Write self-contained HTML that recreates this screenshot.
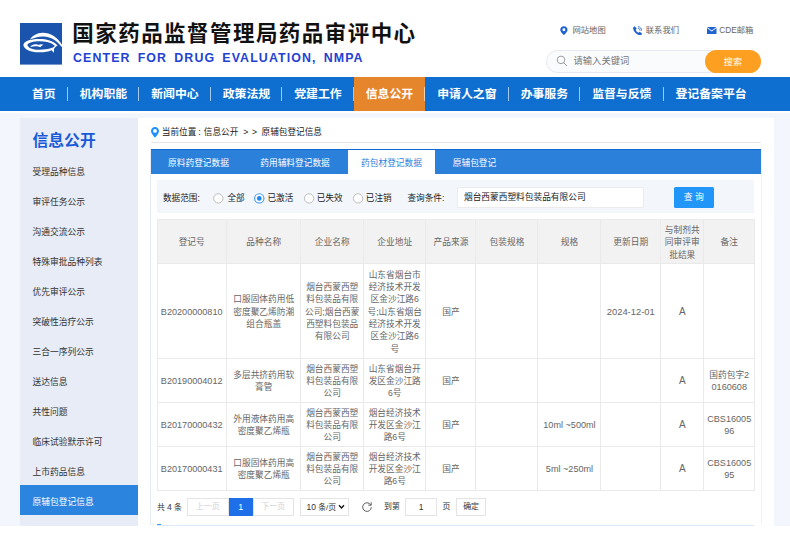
<!DOCTYPE html>
<html lang="zh-CN">
<head>
<meta charset="utf-8">
<title>原辅包登记信息 - 国家药品监督管理局药品审评中心</title>
<style>
*{margin:0;padding:0;box-sizing:border-box;}
html,body{width:790px;height:535px;overflow:hidden;background:#fff;}
body{position:relative;font-family:"Liberation Sans","Noto Sans CJK SC",sans-serif;color:#333;}
.abs{position:absolute;}
.nw{white-space:nowrap;}

/* header */
#logo{left:20px;top:23.1px;width:42px;height:41.6px;overflow:hidden;}
#title{left:72.3px;top:20.2px;font-size:21.5px;line-height:28px;font-weight:bold;color:#111;letter-spacing:1.45px;}
#etitle{left:73px;top:49.6px;font-size:12.4px;line-height:16px;font-weight:bold;color:#2342d2;letter-spacing:1.1px;word-spacing:2.6px;}
.tl{top:24px;font-size:8.3px;line-height:12px;color:#666;}
#sbox{left:546px;top:50px;width:215px;height:23px;border:1px solid #e6e9ef;border-radius:12px;background:#fafbfd;}
#sbtn{left:705px;top:50px;width:56px;height:23px;border-radius:12px;background:#fd9f20;color:#fff;font-size:9.2px;line-height:25.4px;text-align:center;}
#sph{left:573.5px;top:55px;font-size:9.3px;line-height:13px;color:#777;}

/* nav */
#nav{left:0;top:77px;width:790px;height:34px;background:#0f6fd0;}
#nav ul{position:absolute;left:20px;top:0;height:34px;list-style:none;display:flex;}
#nav li{position:relative;height:34px;line-height:34px;padding:0 12px;font-size:11.89px;font-weight:bold;color:#fff;white-space:nowrap;}
#nav li:not(:last-child):after{content:"";position:absolute;right:0;top:10px;width:1px;height:14px;background:rgba(255,255,255,.62);}
#nav li.on{background:#e5852c;}

/* page */
#pagebg{left:0;top:112.6px;width:790px;height:413px;background:#f3f7fd;}
#side{left:20px;top:117.5px;width:118px;height:408.100px;background:#e7ecf6;}
#side h2{position:absolute;left:12.5px;top:12.2px;font-size:15.8px;line-height:22px;color:#1a5ad8;font-weight:bold;white-space:nowrap;}
#side ul{position:absolute;left:0;top:37.5px;width:118px;list-style:none;}
#side li{height:30px;line-height:30px;padding-top:2.2px;padding-left:12.5px;font-size:8.75px;color:#333;white-space:nowrap;overflow:hidden;}
#side li.on{background:#2b84dd;color:#fff;height:29.5px;}

#main{left:138px;top:117.5px;width:635.5px;height:408px;background:#fff;}
#crumb{left:161.8px;top:125.8px;width:170px;height:13px;font-size:8.65px;line-height:13px;color:#222;}
#crumb span{position:absolute;top:0;}
#hr{left:151px;top:142px;width:610px;height:1px;background:#e6e6e6;}
#tabs{left:151px;top:149px;width:610px;height:25px;background:linear-gradient(#1068d0 0,#1068d0 1.4px,#2b80da 1.5px,#2b80da 100%);}
.tab{top:149px;height:25px;line-height:28.4px;font-size:8.7px;color:#fff;text-align:center;white-space:nowrap;}
.tab.on{background:linear-gradient(#1068d0 0,#1068d0 1.4px,#fff 1.5px,#fff 100%);color:#2b7fd9;}
#tabc{left:150px;top:149px;width:612px;height:376px;border-left:1px solid #e4ebf4;border-right:1px solid #eef3f8;}
#bline{left:157px;top:524.5px;width:597px;height:1px;background:#dbe9fb;}
#bdot{left:157px;top:524px;width:3.5px;height:1px;background:#3b9bf5;}
#filt{left:157px;top:180px;width:597px;height:33.4px;background:#f3f6fb;}
.ft{top:191.5px;font-size:8.6px;line-height:13px;color:#222;}
.radio{top:192.8px;width:10.4px;height:10.4px;border:1px solid #b0b0b0;border-radius:50%;background:#fff;}
.radio.on{border-color:#1e80e8;}
.radio.on:after{content:"";position:absolute;left:2.2px;top:2.2px;width:4px;height:4px;border-radius:50%;background:#1e80e8;}
#inp{left:456.6px;top:187.4px;width:187.4px;height:20.8px;border:1px solid #ebebeb;border-radius:2px;background:#fff;font-size:8.7px;line-height:19.4px;padding-left:6.4px;color:#222;}
#qbtn{left:674px;top:187px;width:39.5px;height:20.5px;background:#2196f8;border-radius:1.5px;color:#fff;font-size:8.8px;line-height:20.5px;text-align:center;}

/* table */
#tbl{left:156.5px;top:218.9px;width:598px;border-collapse:collapse;table-layout:fixed;font-size:8.7px;line-height:12.35px;color:#666;}
#tbl td,#tbl th{border:1px solid #eaeaea;text-align:center;vertical-align:middle;padding:1.5px 0 0 0;font-weight:normal;white-space:nowrap;overflow:hidden;}
#tbl th{background:#f2f2f2;color:#666;}
#tbl .la{font-size:9.1px;}

/* pager */
.pg{top:498px;height:18px;line-height:18.6px;font-size:7.9px;color:#333;text-align:center;white-space:nowrap;}
.dg{font-size:8.5px;}
.pb{border:1px solid #e4e4e4;background:#fff;line-height:16.6px;}
</style>
</head>
<body>

<!-- header -->
<svg id="logo" class="abs" viewBox="0 0 42 41.6">
  <rect width="42" height="41.6" fill="#1a54ad"/>
  <path d="M9.800 16.600 C12.500 12.300 17 9.900 22.500 9.700 C31 9.500 38.500 14.500 43.700 24.800 L41.600 23.800 C37 17.800 31.500 13.700 23.500 13.400 C18.500 13.200 14 14.800 9.800 16.600 Z" fill="#fff"/>
  <path fill-rule="evenodd" d="M3.300 21.900 C4 19.400 6.800 17.700 9.700 17.100 C14 15.800 20 15.600 26 16.400 C31 17.300 35.200 19.700 37.600 22.500 C35.700 23.500 34.400 24.800 33.900 26.200 C34.300 27.500 34.100 28.700 33.300 29.800 C32.900 28.700 32.300 27.900 31.600 27.300 C28 28.900 23 29.600 18 29.300 C11.500 28.900 4.300 26.800 3.300 21.900 Z M7.300 21.900 C7.800 20.500 9.700 19.600 11.500 19.200 C15 18.100 22 17.900 27.300 18.900 C30.500 19.500 33.200 21.100 34.900 23 C33.500 24.200 32.400 24.800 31.500 25.100 C28 26.500 23 26.900 18.200 26.800 C13.200 26.600 8.200 25.100 7.300 21.900 Z" fill="#fff"/>
  <path d="M10.300 24 C11.300 22 13.500 21 16.200 21.200 C17.500 21.300 18.300 21.700 18.800 22.100 C19.900 21.200 22 21 23.600 22 C22.200 22.300 21.100 23 20.300 24.200 C19.500 23.900 18.800 23.700 18.200 23.600 C16 23.100 13 23.100 10.300 24 Z" fill="#fff"/>
</svg>
<div id="title" class="abs nw">国家药品监督管理局药品审评中心</div>
<div id="etitle" class="abs nw">CENTER FOR DRUG EVALUATION, NMPA</div>

<svg class="abs" style="left:559.900px;top:25.600px;width:7.800px;height:9.200px" viewBox="0 0 16 18"><path d="M8 0C3.6 0 0.5 3.2 0.5 7.2 0.5 12 8 18 8 18s7.5-6 7.5-10.8C15.500 3.200 12.400 0 8 0zm0 10.200a3 3 0 1 1 0-6 3 3 0 0 1 0 6z" fill="#1f63d0"/></svg>
<div class="abs nw tl" style="left:572.5px">网站地图</div>
<svg class="abs" style="left:632.5px;top:25.5px;width:9.5px;height:9.5px" viewBox="0 0 20 20"><path d="M4.200 1.200l3 3.600c.4.500.4 1.200 0 1.700l-1.400 1.700c1.200 2.600 3.200 4.600 5.800 5.800l1.700-1.400c.5-.4 1.200-.4 1.700 0l3.600 3c.6.500.6 1.400.1 2l-1.400 1.400c-.8.800-2 1.100-3.100.8C7.800 18.200 1.800 12.200.2 5.800c-.3-1.100 0-2.300.8-3.100l1.400-1.400c.5-.6 1.400-.6 1.800-.1z" fill="#1f63d0"/><path d="M11 1.500c4 .3 7.200 3.500 7.500 7.500M11 5c2.100.3 3.700 1.900 4 4" fill="none" stroke="#1f63d0" stroke-width="1.800" stroke-linecap="round"/></svg>
<div class="abs nw tl" style="left:645.8px">联系我们</div>
<svg class="abs" style="left:707px;top:27px;width:9.5px;height:7px" viewBox="0 0 19 14"><path d="M0 0h19L9.500 7z" fill="#1f63d0"/><path d="M0 2.200V14h19V2.200L9.500 9.200z" fill="#1f63d0"/></svg>
<div class="abs nw tl" style="left:719.3px">CDE邮箱</div>

<div id="sbox" class="abs"></div>
<svg class="abs" style="left:555.800px;top:55.300px;width:12px;height:12px" viewBox="0 0 24 24"><circle cx="10" cy="9.800" r="7.600" fill="none" stroke="#8e8e8e" stroke-width="1.700"/><path d="M15.600 15.600l5.800 5.800" stroke="#8e8e8e" stroke-width="1.900" stroke-linecap="round"/></svg>
<div id="sph" class="abs nw">请输入关键词</div>
<div id="sbtn" class="abs">搜索</div>

<!-- nav -->
<div id="nav" class="abs">
  <ul>
    <li>首页</li><li>机构职能</li><li>新闻中心</li><li>政策法规</li><li>党建工作</li><li class="on">信息公开</li><li>申请人之窗</li><li>办事服务</li><li>监督与反馈</li><li>登记备案平台</li>
  </ul>
</div>

<div id="pagebg" class="abs"></div>

<!-- sidebar -->
<div id="side" class="abs">
  <h2>信息公开</h2>
  <ul>
    <li>受理品种信息</li><li>审评任务公示</li><li>沟通交流公示</li><li>特殊审批品种列表</li><li>优先审评公示</li><li>突破性治疗公示</li><li>三合一序列公示</li><li>送达信息</li><li>共性问题</li><li>临床试验默示许可</li><li>上市药品信息</li><li class="on">原辅包登记信息</li>
  </ul>
</div>

<!-- main -->
<div id="main" class="abs"></div>
<svg class="abs" style="left:150.700px;top:127.200px;width:8px;height:10.600px" viewBox="0 0 16 21.200"><path d="M8 0C3.500 0 0 3.500 0 7.900 0 13.300 8 21.200 8 21.200S16 13.300 16 7.900C16 3.500 12.500 0 8 0zm0 11.600a3.800 3.800 0 1 1 0-7.600 3.800 3.800 0 0 1 0 7.600z" fill="#1e8fff"/></svg>
<div id="crumb" class="abs nw"><span style="left:0">当前位置</span><span style="left:36.500px">:</span><span style="left:42px">信息公开</span><span style="left:81.500px">&gt;</span><span style="left:90.300px">&gt;</span><span style="left:99.800px">原辅包登记信息</span></div>
<div id="hr" class="abs"></div>

<div id="tabc" class="abs"></div>
<div id="tabs" class="abs"></div>
<div class="abs tab" style="left:155px;width:87px">原料药登记数据</div>
<div class="abs tab" style="left:246.500px;width:97px">药用辅料登记数据</div>
<div class="abs tab on" style="left:348px;width:87px">药包材登记数据</div>
<div class="abs tab" style="left:439.500px;width:70px">原辅包登记</div>

<div id="filt" class="abs"></div>
<div class="abs nw ft" style="left:163px">数据范围:</div>
<svg class="abs" style="left:205px;top:190px;width:170px;height:17px" viewBox="0 0 170 17">
  <circle cx="13.300" cy="8.400" r="4.650" fill="#fff" stroke="#bdbdbd" stroke-width="1"/>
  <circle cx="54.300" cy="8.400" r="4.650" fill="#fff" stroke="#3d97f2" stroke-width="1.100"/>
  <circle cx="54.300" cy="8.400" r="2.350" fill="#1e88f5"/>
  <circle cx="104.100" cy="8.400" r="4.650" fill="#fff" stroke="#bdbdbd" stroke-width="1"/>
  <circle cx="153.100" cy="8.400" r="4.650" fill="#fff" stroke="#bdbdbd" stroke-width="1"/>
</svg>
<div class="abs nw ft" style="left:227.500px">全部</div>
<div class="abs nw ft" style="left:267.500px">已激活</div>
<div class="abs nw ft" style="left:316.800px">已失效</div>
<div class="abs nw ft" style="left:365.800px">已注销</div>
<div class="abs nw ft" style="left:407.500px">查询条件:</div>
<div id="inp" class="abs nw">烟台西蒙西塑料包装品有限公司</div>
<div id="qbtn" class="abs nw">查 询</div>

<table id="tbl" class="abs">
  <colgroup><col style="width:69.400px"><col style="width:74.600px"><col style="width:62.500px"><col style="width:62.500px"><col style="width:50px"><col style="width:62px"><col style="width:63px"><col style="width:59.500px"><col style="width:43.500px"><col style="width:50.500px"></colgroup>
  <tr style="height:44.500px"><th>登记号</th><th>品种名称</th><th>企业名称</th><th>企业地址</th><th>产品来源</th><th>包装规格</th><th>规格</th><th>更新日期</th><th>与制剂共<br>同审评审<br>批结果</th><th>备注</th></tr>
  <tr style="height:94.300px"><td><span class="la">B20200000810</span></td><td>口服固体药用低<br>密度聚乙烯防潮<br>组合瓶盖</td><td>烟台西蒙西塑<br>料包装品有限<br>公司;烟台西蒙<br>西塑料包装品<br>有限公司</td><td>山东省烟台市<br>经济技术开发<br>区金沙江路6<br>号;山东省烟台<br>经济技术开发<br>区金沙江路6<br>号</td><td>国产</td><td></td><td></td><td><span class="la" style="font-size:9.400px">2024-12-01</span></td><td><span class="la" style="font-size:10px">A</span></td><td></td></tr>
  <tr style="height:44.300px"><td><span class="la">B20190004012</span></td><td>多层共挤药用软<br>膏管</td><td>烟台西蒙西塑<br>料包装品有限<br>公司</td><td>山东省烟台开<br>发区金沙江路<br>6号</td><td>国产</td><td></td><td></td><td></td><td><span class="la" style="font-size:10px">A</span></td><td>国药包字<span class="la">2<br>0160608</span></td></tr>
  <tr style="height:44px"><td><span class="la">B20170000432</span></td><td>外用液体药用高<br>密度聚乙烯瓶</td><td>烟台西蒙西塑<br>料包装品有限<br>公司</td><td>烟台经济技术<br>开发区金沙江<br>路6号</td><td>国产</td><td></td><td><span class="la">10ml ~500ml</span></td><td></td><td><span class="la" style="font-size:10px">A</span></td><td><span class="la">CBS16005<br>96</span></td></tr>
  <tr style="height:44.100px"><td><span class="la">B20170000431</span></td><td>口服固体药用高<br>密度聚乙烯瓶</td><td>烟台西蒙西塑<br>料包装品有限<br>公司</td><td>烟台经济技术<br>开发区金沙江<br>路6号</td><td>国产</td><td></td><td><span class="la">5ml ~250ml</span></td><td></td><td><span class="la" style="font-size:10px">A</span></td><td><span class="la">CBS16005<br>95</span></td></tr>
</table>

<!-- pager -->
<div id="bline" class="abs"></div><div id="bdot" class="abs"></div>
<div class="abs pg" style="left:157px;width:26px;text-align:left">共 <span class="dg">4</span> 条</div>
<div class="abs pg pb" style="left:186.500px;width:42.500px;color:#d2d2d2">上一页</div>
<div class="abs pg" style="left:228.500px;width:24.500px;background:#1e6fe8;color:#fff;z-index:2"><span class="dg" style="font-size:8.800px">1</span></div>
<div class="abs pg pb" style="left:252.500px;width:41.500px;color:#d2d2d2">下一页</div>
<div class="abs pg pb" style="left:300px;width:48.500px;text-align:left;padding-left:5.500px"><span class="dg">10</span> 条/页</div>
<svg class="abs" style="left:338px;top:504.300px;width:7px;height:5.500px" viewBox="0 0 14 11"><path d="M2 2.500l5 5.500 5-5.500" fill="none" stroke="#111" stroke-width="2.600"/></svg>
<svg class="abs" style="left:360.500px;top:500.500px;width:12px;height:12px" viewBox="0 0 24 24"><path d="M19.300 7.600A8.600 8.600 0 1 0 20.600 12.500" fill="none" stroke="#4a4a4a" stroke-width="1.800"/><path d="M20.400 2.600v5.800h-5.800" fill="none" stroke="#4a4a4a" stroke-width="1.800"/></svg>
<div class="abs pg" style="left:384px;width:16px">到第</div>
<div class="abs pg pb" style="left:405px;width:32px"><span class="dg">1</span></div>
<div class="abs pg" style="left:441.500px;width:10px">页</div>
<div class="abs pg pb" style="left:456.300px;width:29.500px">确定</div>

</body>
</html>
